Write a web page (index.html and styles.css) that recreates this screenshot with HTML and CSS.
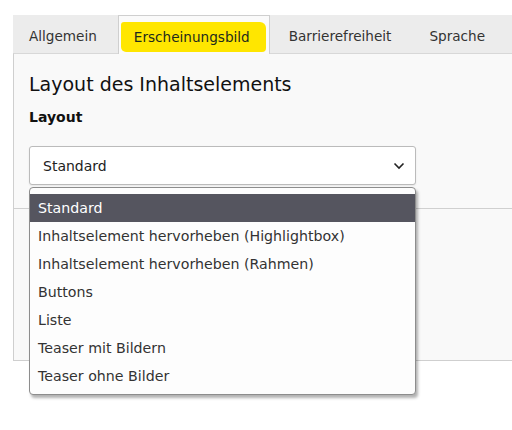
FILE: index.html
```html
<!DOCTYPE html>
<html lang="de">
<head>
    <meta charset="UTF-8">
    <title>Erscheinungsbild</title>
    <link rel="stylesheet" href="styles.css">
</head>
<body>
    <ul class="tabs">
        <li class="tab">Allgemein</li>
        <li class="tab active"><span class="marker">Erscheinungsbild</span></li>
        <li class="tab">Barrierefreiheit</li>
        <li class="tab">Sprache</li>
    </ul>

    <div class="panel">
        <div class="section">
            <h2>Layout des Inhaltselements</h2>
            <label class="field-label">Layout</label>
            <div class="select-wrap">
                <div class="select">
                    <span>Standard</span>
                    <svg class="chevron" width="12" height="8" viewBox="0 0 12 8">
                        <path d="M1.5 1.5 L6 6 L10.5 1.5" fill="none" stroke="#222" stroke-width="1.6"/>
                    </svg>
                </div>
                <ul class="options">
                    <li class="selected">Standard</li>
                    <li>Inhaltselement hervorheben (Highlightbox)</li>
                    <li>Inhaltselement hervorheben (Rahmen)</li>
                    <li>Buttons</li>
                    <li>Liste</li>
                    <li>Teaser mit Bildern</li>
                    <li>Teaser ohne Bilder</li>
                </ul>
            </div>
        </div>
    </div>
</body>
</html>
```

FILE: styles.css
```css
html {
    height: 100%;
}

body {
    margin: 0;
    min-height: 100%;
    padding: 15px 0 0 13px;
    box-sizing: border-box;
    font-family: "DejaVu Sans", Verdana, sans-serif;
    font-size: 14px;
    color: #333;
    background: #fff;
}

.tabs {
    display: flex;
    margin: 0;
    padding: 0;
    list-style: none;
    background-color: #ececec;
    height: 38px;
}

.tab {
    padding: 0 19px 0 19px;
    line-height: 42px;
    font-size: 13.6px;
    color: #333;
}

.tab:first-child {
    padding: 0 21px 0 16px;
}

.tab.active {
    position: relative;
    z-index: 1;
    background-color: #fafafa;
    border: 1px solid #cfcfcf;
    border-bottom: none;
    height: 38px;
    display: flex;
    align-items: flex-start;
    padding: 0 3px 0 2px;
    margin-bottom: -1px;
}

.marker {
    background-color: #ffe600;
    line-height: 16px;
    padding: 7px 16px 7px 13px;
    margin-top: 6px;
    border-radius: 3px 6px 4px 5px;
    color: #1d2a1d;
}

.panel {
    background-color: #f9f9f9;
    border-top: 1px solid #d8d8d8;
    border-left: 1px solid #cfcfcf;
    border-bottom: 1px solid #cfcfcf;
    height: 306px;
}

.section {
    padding: 15px 16px 0 15px;
    border-bottom: 1px solid #d0d0d0;
    height: 139px;
}

h2 {
    margin: 0;
    font-weight: normal;
    font-size: 19px;
    color: #111;
    line-height: 30px;
}

.field-label {
    display: block;
    font-weight: bold;
    font-size: 14px;
    color: #111;
    margin-top: 10px;
}

.select-wrap {
    position: relative;
    width: 387px;
    margin-top: 21px;
}

.select {
    display: flex;
    align-items: center;
    justify-content: space-between;
    box-sizing: border-box;
    height: 39px;
    padding: 0 10px 0 13px;
    background-color: #fff;
    border: 1px solid #bbb;
    border-radius: 3px;
    box-shadow: 0 1px 2px rgba(0, 0, 0, 0.08);
    font-size: 14px;
    color: #222;
}

.options {
    position: absolute;
    top: 41px;
    left: 0;
    z-index: 5;
    box-sizing: border-box;
    width: 387px;
    margin: 0;
    padding: 6px 0 4px;
    list-style: none;
    background-color: #fdfdfd;
    border: 1px solid #8d8d8d;
    border-radius: 4px;
    box-shadow: 2px 3px 3px rgba(0, 0, 0, 0.3);
}

.options li {
    height: 28px;
    line-height: 28px;
    padding-left: 8px;
    font-size: 14.2px;
    color: #333;
    white-space: nowrap;
}

.options li.selected {
    background-color: #55555f;
    color: #fff;
}
```
